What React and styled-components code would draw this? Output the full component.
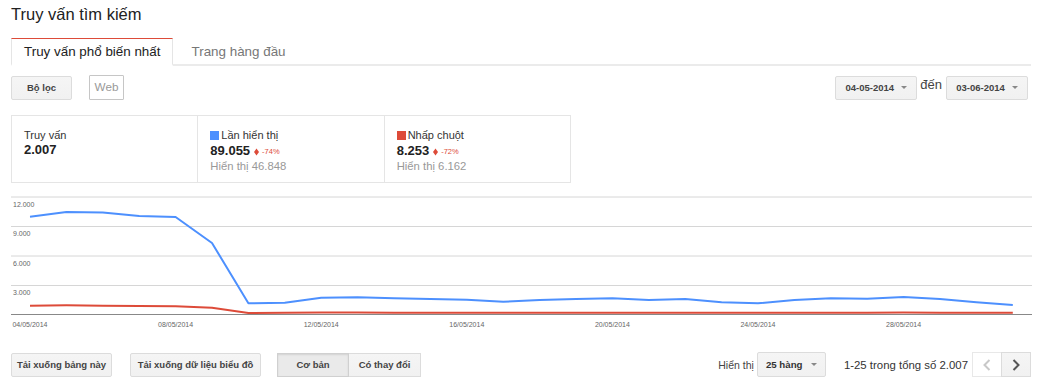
import React from 'react';
import styled, { createGlobalStyle, css } from 'styled-components';

const GlobalStyle = createGlobalStyle`
  body {
    margin: 0;
    background: #fff;
    font-family: Arial, "Liberation Sans", sans-serif;
    color: #222;
  }
`;

const blue = [216.7, 212, 212.5, 216, 217, 243, 303.3, 302.7, 297.7, 297.3, 298.3, 299, 299.7, 301.7, 300, 299, 298.3, 300, 299, 302.3, 303.3, 300, 298.3, 298.7, 297, 299, 302.3, 305];
const red = [305.7, 305.3, 305.7, 306, 306.3, 307.7, 313, 312.7, 312.6, 312.6, 312.7, 312.7, 312.8, 312.8, 312.7, 312.7, 312.7, 312.8, 312.8, 312.8, 312.8, 312.7, 312.7, 312.7, 312.6, 312.7, 312.8, 312.8];
const xAt = (i) => 30 + i * 36.4;
const toPoints = (arr) => arr.map((y, i) => `${xAt(i).toFixed(1)},${y}`).join(' ');

const yTicks = [
  { y: 197, label: '12.000' },
  { y: 226.5, label: '9.000' },
  { y: 256, label: '6.000' },
  { y: 285.5, label: '3.000' },
];
const xTicks = ['04/05/2014', '08/05/2014', '12/05/2014', '16/05/2014', '20/05/2014', '24/05/2014', '28/05/2014'];

const metrics = [
  { label: 'Truy vấn', value: '2.007' },
  { label: 'Lần hiển thị', value: '89.055', color: '#4d90fe', delta: '-74%', sub: 'Hiển thị 46.848' },
  { label: 'Nhấp chuột', value: '8.253', color: '#dd4b39', delta: '-72%', sub: 'Hiển thị 6.162' },
];

export default function App() {
  return (
    <Page>
      <GlobalStyle />
      <Title>Truy vấn tìm kiếm</Title>
      <TabBar>
        <Tab $active>Truy vấn phổ biến nhất</Tab>
        <Tab>Trang hàng đầu</Tab>
      </TabBar>

      <Toolbar>
        <Group>
          <Button $w={61}>Bộ lọc</Button>
          <Chip>Web</Chip>
        </Group>
        <Group>
          <Button $w={82}>04-05-2014 <Caret /></Button>
          <To>đến</To>
          <Button $w={82}>03-06-2014 <Caret /></Button>
        </Group>
      </Toolbar>

      <Metrics>
        {metrics.map((m) => (
          <Metric key={m.label}>
            <MetricLabel>
              {m.color && <Swatch $color={m.color} />}
              {m.label}
            </MetricLabel>
            <MetricValue>
              {m.value}
              {m.delta && (
                <Delta>
                  <svg width="5" height="8" viewBox="0 0 5 8">
                    <path d="M2.5 0.5L5 4 2.5 7.5 0 4z" fill="#dd4b39" />
                  </svg>
                  {m.delta}
                </Delta>
              )}
            </MetricValue>
            {m.sub && <MetricSub>{m.sub}</MetricSub>}
          </Metric>
        ))}
      </Metrics>

      <Chart width="1021" height="140" viewBox="11 190 1021 140">
        {yTicks.map((t) => (
          <g key={t.label}>
            <line x1="11" x2="1032" y1={t.y} y2={t.y} stroke="#d6d6d6" strokeWidth="1" />
            <text x="13" y={t.y + 9.5} fontSize="7" fill="#666">{t.label}</text>
          </g>
        ))}
        <line x1="11" x2="1032" y1="314.5" y2="314.5" stroke="#888" strokeWidth="1" />
        <polyline points={toPoints(red)} fill="none" stroke="#dd4b39" strokeWidth="2" strokeLinejoin="round" />
        <polyline points={toPoints(blue)} fill="none" stroke="#4d90fe" strokeWidth="2" strokeLinejoin="round" />
        {xTicks.map((l, k) => (
          <text key={l} x={xAt(k * 4)} y="326.5" fontSize="7" fill="#666" textAnchor="middle">{l}</text>
        ))}
      </Chart>

      <Footer>
        <Group $gap={18}>
          <Button $w={101}>Tải xuống bảng này</Button>
          <Button $w={131}>Tải xuống dữ liệu biểu đồ</Button>
          <Segmented>
            <SegButton $pressed>Cơ bản</SegButton>
            <SegButton>Có thay đổi</SegButton>
          </Segmented>
        </Group>
        <Group>
          <Small>Hiển thị</Small>
          <Select>25 hàng <Caret /></Select>
          <Range>1-25 trong tổng số 2.007</Range>
          <Pager>
            <PageBtn>
              <svg width="8" height="12" viewBox="0 0 8 12">
                <polyline points="6.5,1 1.5,6 6.5,11" fill="none" stroke="#c8c8c8" strokeWidth="2" />
              </svg>
            </PageBtn>
            <PageBtn $on>
              <svg width="8" height="12" viewBox="0 0 8 12">
                <polyline points="1.5,1 6.5,6 1.5,11" fill="none" stroke="#555" strokeWidth="2" />
              </svg>
            </PageBtn>
          </Pager>
        </Group>
      </Footer>
    </Page>
  );
}

const Page = styled.div`
  width: 1020px;
  padding: 4px 12px 0 11px;
`;

const Title = styled.h1`
  margin: 0;
  font-size: 16.5px;
  font-weight: normal;
  line-height: 20px;
  color: #222;
`;

const TabBar = styled.div`
  display: flex;
  margin-top: 14px;
  border-bottom: 2px solid #ebebeb;
`;

const Tab = styled.div`
  height: 25px;
  line-height: 25px;
  padding: 0 12px;
  margin-bottom: -2px;
  font-size: 13.4px;
  color: #777;
  border-top: 1px solid transparent;
  border-bottom: 2px solid transparent;
  margin-left: 6px;
  ${(p) => p.$active && css`
    margin-left: 0;
    color: #222;
    background: #fff;
    border-top-color: #dd4b39;
    border-left: 1px solid #e5e5e5;
    border-right: 1px solid #e5e5e5;
    border-bottom-color: #fff;
  `}
`;

const Toolbar = styled.div`
  display: flex;
  justify-content: space-between;
  align-items: center;
  margin-top: 9px;
  padding-right: 3px;
  height: 25px;
`;

const Group = styled.div`
  display: flex;
  align-items: center;
  gap: ${(p) => (p.$gap != null ? p.$gap : 0)}px;
`;

const Button = styled.div`
  box-sizing: border-box;
  width: ${(p) => p.$w}px;
  height: 24px;
  display: flex;
  align-items: center;
  justify-content: center;
  gap: 7px;
  font-size: 9.5px;
  font-weight: bold;
  color: #444;
  background: linear-gradient(#f5f5f5, #f1f1f1);
  border: 1px solid #dcdcdc;
  border-radius: 2px;
`;

const Chip = styled.div`
  box-sizing: border-box;
  margin-left: 17px;
  width: 35px;
  height: 25px;
  display: flex;
  align-items: center;
  justify-content: center;
  font-size: 11.7px;
  color: #999;
  background: #fff;
  border: 1px solid #c6c6c6;
  border-radius: 1px;
  padding-bottom: 3px;
`;

const Caret = styled.span`
  width: 0;
  height: 0;
  border-left: 3px solid transparent;
  border-right: 3px solid transparent;
  border-top: 3px solid #888;
`;

const To = styled.span`
  font-size: 13px;
  color: #444;
  margin: 0 4px 0 3px;
  padding-bottom: 6px;
`;

const Metrics = styled.div`
  display: flex;
  width: 560px;
  height: 68px;
  margin-top: 15px;
  border-top: 1px solid #e5e5e5;
  border-bottom: 1px solid #e5e5e5;
  border-left: 1px solid #e5e5e5;
  box-sizing: border-box;
`;

const Metric = styled.div`
  flex: 1;
  border-right: 1px solid #e5e5e5;
  padding: 13px 0 0 12px;
`;

const MetricLabel = styled.div`
  display: flex;
  align-items: center;
  font-size: 11px;
  line-height: 13px;
  color: #333;
`;

const Swatch = styled.span`
  width: 9px;
  height: 9px;
  margin-right: 2px;
  background: ${(p) => p.$color};
`;

const MetricValue = styled.div`
  display: flex;
  align-items: center;
  font-size: 13px;
  font-weight: bold;
  line-height: 15px;
  color: #222;
`;

const Delta = styled.span`
  display: inline-flex;
  align-items: center;
  gap: 3px;
  margin-left: 4px;
  font-size: 7.5px;
  font-weight: normal;
  color: #dd4b39;
  padding-top: 2px;
`;

const MetricSub = styled.div`
  font-size: 11.3px;
  line-height: 14px;
  color: #999;
`;

const Chart = styled.svg`
  display: block;
  margin-top: 7px;
  font-family: Arial, "Liberation Sans", sans-serif;
`;

const Footer = styled.div`
  display: flex;
  justify-content: space-between;
  align-items: center;
  margin-top: 22px;
  height: 25px;
`;

const Segmented = styled.div`
  display: flex;
  margin-left: -2px;
`;

const SegButton = styled.div`
  box-sizing: border-box;
  width: 72px;
  height: 24px;
  display: flex;
  align-items: center;
  justify-content: center;
  font-size: 9.5px;
  font-weight: bold;
  color: #444;
  border: 1px solid #dcdcdc;
  background: linear-gradient(#f5f5f5, #f1f1f1);
  & + & {
    border-left: none;
  }
  ${(p) => p.$pressed && css`
    background: #eaeaea;
    box-shadow: inset 0 1px 2px rgba(0, 0, 0, 0.1);
    border-color: #d0d0d0;
  `}
`;

const Small = styled.span`
  font-size: 10.5px;
  color: #444;
  margin-right: 3px;
`;

const Select = styled.div`
  box-sizing: border-box;
  width: 69px;
  height: 25px;
  display: flex;
  align-items: center;
  justify-content: space-between;
  padding: 0 8px;
  font-size: 9.7px;
  font-weight: bold;
  color: #333;
  background: linear-gradient(#f5f5f5, #f1f1f1);
  border: 1px solid #dcdcdc;
  border-radius: 2px;
`;

const Range = styled.span`
  font-size: 11.4px;
  color: #333;
  margin: 0 4px 0 18px;
`;

const Pager = styled.div`
  display: flex;
`;

const PageBtn = styled.div`
  box-sizing: border-box;
  width: 30px;
  height: 25px;
  display: flex;
  align-items: center;
  justify-content: center;
  border: 1px solid #e8e8e8;
  background: #fff;
  ${(p) => p.$on && css`
    border: 1px solid #dcdcdc;
    background: linear-gradient(#f5f5f5, #f1f1f1);
    margin-left: -1px;
  `}
`;
